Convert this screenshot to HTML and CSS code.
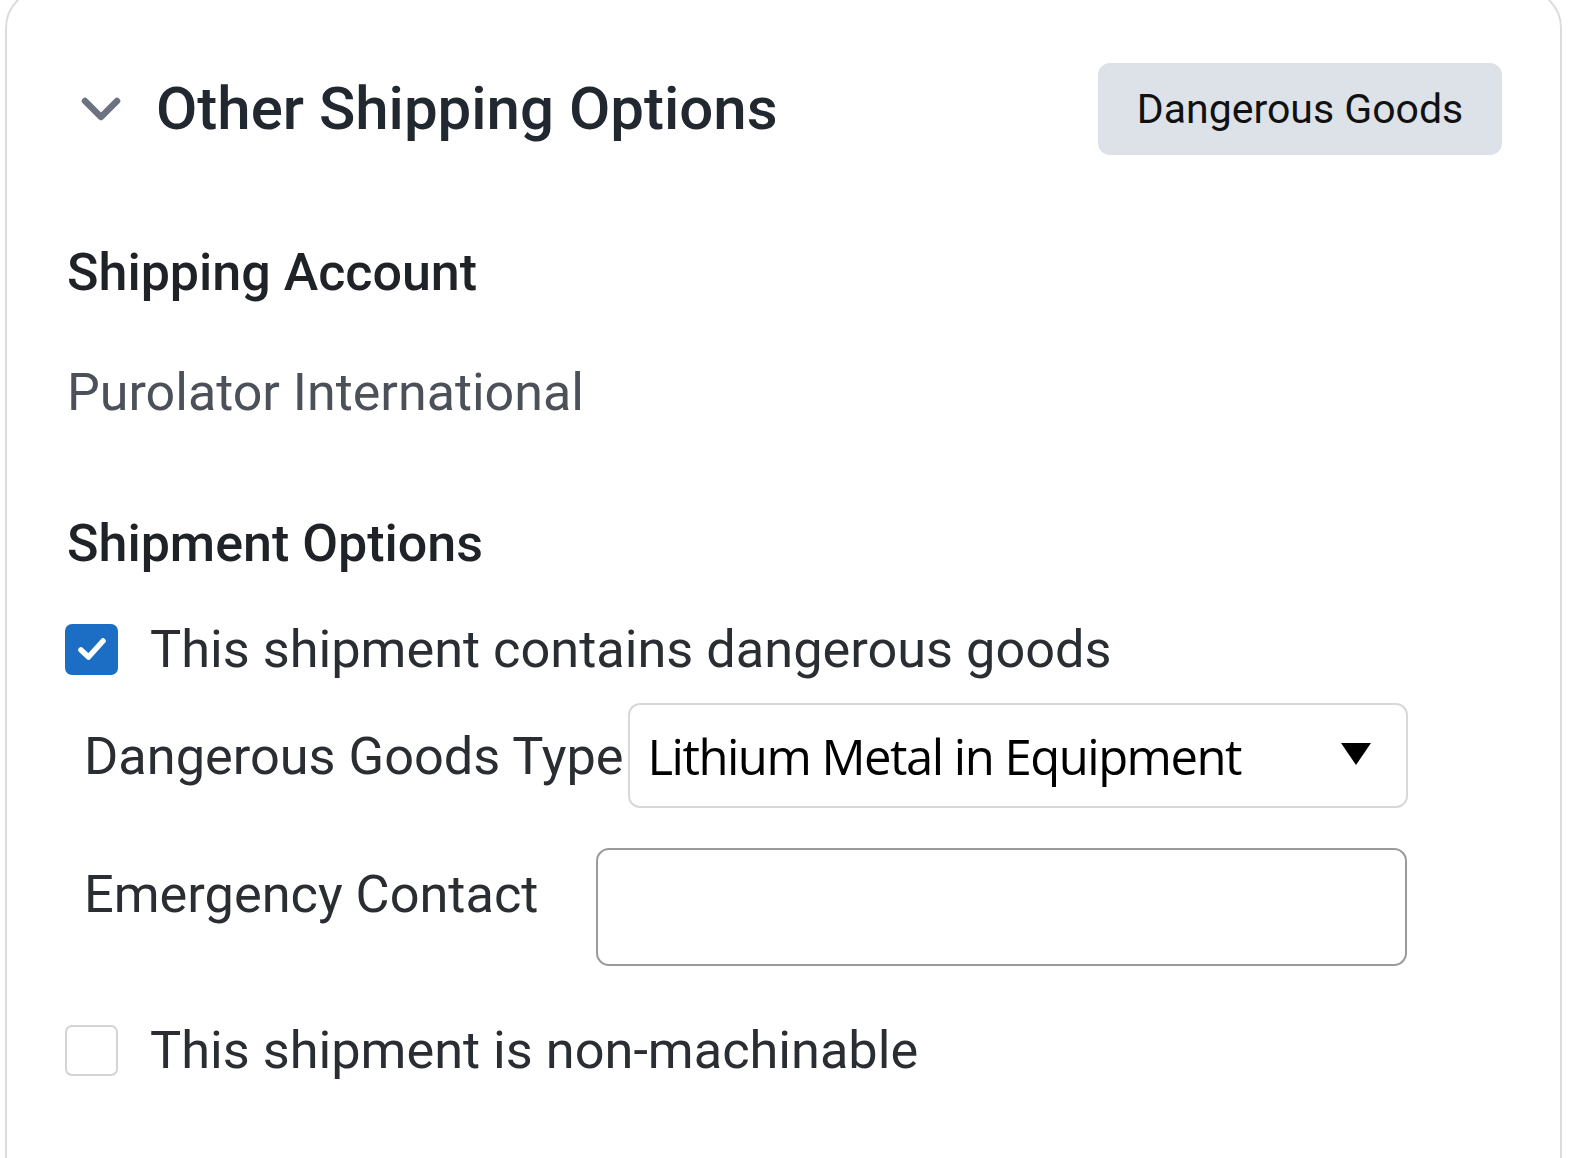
FILE: index.html
```html
<!DOCTYPE html>
<html>
<head>
<meta charset="utf-8">
<link rel="stylesheet" href="styles.css">
</head>
<body>
<div class="card">
  <div class="header">
    <div class="title-wrap">
      <svg class="chevron" width="42" height="28" viewBox="0 0 42 28"><path d="M5 6 L21 22 L37 6" fill="none" stroke="#6b7380" stroke-width="6.5" stroke-linecap="round" stroke-linejoin="round"/></svg>
      <h2 class="title">Other Shipping Options</h2>
    </div>
    <button class="dg-btn">Dangerous Goods</button>
  </div>

  <h3 class="section">Shipping Account</h3>
  <div class="account">Purolator International</div>

  <h3 class="section section-2">Shipment Options</h3>

  <label class="check-row">
    <span class="box checked"><svg width="36" height="30" viewBox="0 0 36 30"><path d="M7 16 L14.5 23 L29 7" fill="none" stroke="#fff" stroke-width="5.5" stroke-linecap="round" stroke-linejoin="round"/></svg></span>
    <span class="check-label">This shipment contains dangerous goods</span>
  </label>

  <div class="field-row">
    <span class="field-label">Dangerous Goods Type</span>
    <div class="select">
      <span class="select-text">Lithium Metal in Equipment</span>
      <svg class="arrow" width="32" height="24" viewBox="0 0 32 24"><path d="M1 1 H31 L16 23 Z" fill="#000"/></svg>
    </div>
  </div>

  <div class="field-row row-2">
    <span class="field-label label-top">Emergency Contact</span>
    <div class="input"></div>
  </div>

  <label class="check-row row-last">
    <span class="box"></span>
    <span class="check-label">This shipment is non-machinable</span>
  </label>
</div>
</body>
</html>
```
FILE: styles.css
```css
html, body {
  margin: 0;
  padding: 0;
  background: #fff;
}
body {
  font-family: Roboto, "Liberation Sans", sans-serif;
  color: #1f2328;
  overflow: hidden;
}
.card {
  margin: -12px 0 0 5px;
  width: 1557px;
  height: 1300px;
  border: 2px solid #dcdcdc;
  border-radius: 40px;
  box-sizing: border-box;
  padding: 73px 0 0 60px;
}
.header {
  display: flex;
  align-items: center;
  justify-content: space-between;
  padding: 0 58px 0 13px;
  height: 92px;
}
.title-wrap {
  display: flex;
  align-items: center;
}
.chevron {
  margin-right: 34px;
}
.title {
  margin: 0;
  font-size: 60px;
  line-height: 70px;
  font-weight: 500;
  color: #212830;
}
.dg-btn {
  font-family: Roboto, "Liberation Sans", sans-serif;
  font-size: 41px;
  color: #111;
  background: #dde2e8;
  border: none;
  border-radius: 12px;
  width: 404px;
  height: 92px;
  padding: 0;
}
.section {
  margin: 88px 0 0 0;
  font-size: 52px;
  line-height: 60px;
  font-weight: 500;
  color: #1f2328;
}
.section-2 {
  margin-top: 91px;
}
.account {
  margin-top: 60px;
  font-size: 52px;
  line-height: 60px;
  color: #4b5059;
}
.check-row {
  display: flex;
  align-items: center;
  height: 60px;
  margin-top: 45px;
}
.box {
  margin-left: -2px;
  width: 53px;
  height: 51px;
  box-sizing: border-box;
  border: 2px solid #d4d4d4;
  border-radius: 7px;
  display: flex;
  align-items: center;
  justify-content: center;
  flex: none;
}
.box.checked {
  background: #1b6ec4;
  border-color: #1b6ec4;
}
.check-label {
  margin-left: 32px;
  font-size: 52.3px;
  line-height: 60px;
  color: #2a2e33;
}
.field-row {
  display: flex;
  align-items: center;
  margin: 24px 0 0 17px;
}
.row-2 {
  margin-top: 40px;
  align-items: flex-start;
}
.field-label {
  font-size: 52.3px;
  line-height: 60px;
  color: #2a2e33;
  flex: none;
}
.label-top {
  margin-top: 16px;
}
.select {
  margin-left: 4px;
  width: 780px;
  height: 105px;
  box-sizing: border-box;
  border: 2px solid #d8d8d8;
  border-radius: 12px;
  display: flex;
  align-items: center;
  justify-content: space-between;
  padding: 0 34px 0 18px;
}
.select-text {
  font-family: "Open Sans", Roboto, sans-serif;
  font-size: 49px;
  color: #000;
  letter-spacing: -1.5px;
}
.arrow {
  margin-top: -4px;
}
.input {
  margin-left: 58px;
  width: 811px;
  height: 118px;
  box-sizing: border-box;
  border: 2px solid #9a9a9a;
  border-radius: 13px;
}
.row-last {
  margin-top: 54px;
}
```
